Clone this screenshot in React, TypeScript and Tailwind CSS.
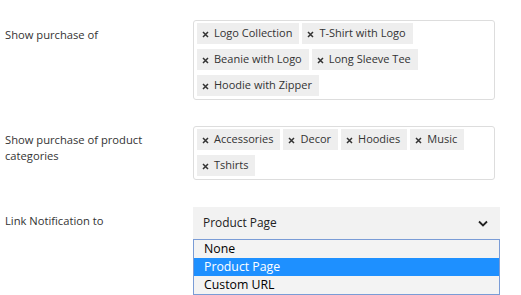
import React from "react";

const Tag = ({ label }: { label: string }) => (
  <span className="flex h-[21px] items-center bg-[#eeeeee] pl-[5px] pr-[7px] text-[11px] text-[#333333]">
    <svg width="7" height="7" viewBox="0 0 7 7" className="mr-[5px] mt-[1px]">
      <path d="M1 1L6 6M6 1L1 6" stroke="#333" strokeWidth="1.5" />
    </svg>
    <span>{label}</span>
  </span>
);

export default function App() {
  const font = { fontFamily: '"Open Sans", "Noto Sans", sans-serif' };
  return (
    <div className="h-[295px] w-[521px] bg-white text-[11.2px] text-[#333333]" style={font}>
      <div className="pt-[20px]">
        <div className="flex">
          <div className="w-[193px] pl-[5px] pt-[7px]">Show purchase of</div>
          <div className="flex h-[80px] w-[302px] flex-wrap content-start gap-x-[3px] gap-y-[5px] rounded-[3px] border border-[#dddddd] px-[3px] py-[2px]">
            {["Logo Collection", "T-Shirt with Logo", "Beanie with Logo", "Long Sleeve Tee", "Hoodie with Zipper"].map((t) => (
              <Tag key={t} label={t} />
            ))}
          </div>
        </div>
        <div className="mt-[26px] flex">
          <div className="w-[193px] pl-[5px] pr-[40px] pt-[6px] leading-[16px]">Show purchase of product categories</div>
          <div className="flex h-[54px] w-[302px] flex-wrap content-start gap-x-[3px] gap-y-[5px] rounded-[3px] border border-[#dddddd] px-[3px] py-[2px]">
            {["Accessories", "Decor", "Hoodies", "Music", "Tshirts"].map((t) => (
              <Tag key={t} label={t} />
            ))}
          </div>
        </div>
        <div className="mt-[27px] flex">
          <div className="w-[193px] pl-[5px] pt-[6px]">Link Notification to</div>
          <div className="w-[307px]">
            <div className="flex h-[32px] items-center justify-between bg-[#f2f2f2] pl-[10px] pr-[12px] text-[11.9px] text-[#222222]">
              <span>Product Page</span>
              <svg width="10" height="7" viewBox="0 0 10 7">
                <path d="M1 1.5L5 5.5L9 1.5" fill="none" stroke="#222" strokeWidth="1.8" />
              </svg>
            </div>
            <div className="border border-[#7a9cd6] bg-[#f3f3f3] text-[12.3px] leading-[18px] text-black">
              <div className="pl-[10px]">None</div>
              <div className="bg-[#1e90ff] pl-[10px] text-white">Product Page</div>
              <div className="pl-[10px]">Custom URL</div>
            </div>
          </div>
        </div>
      </div>
    </div>
  );
}
